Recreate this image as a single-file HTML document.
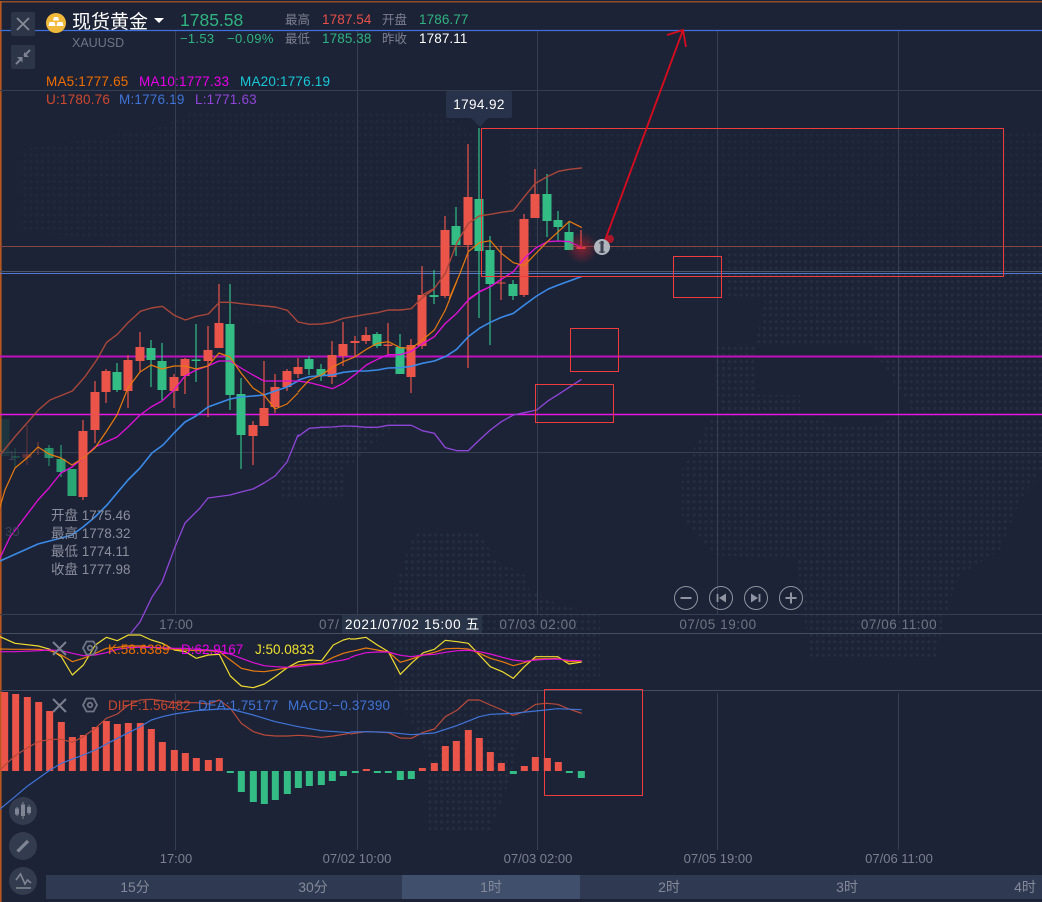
<!DOCTYPE html>
<html><head><meta charset="utf-8"><style>
html,body{margin:0;padding:0;background:#1c2336;width:1042px;height:902px;overflow:hidden}
svg{display:block}
text{font-family:"Liberation Sans","Noto Sans CJK SC",sans-serif}
</style></head><body>
<svg width="1042" height="902" viewBox="0 0 1042 902" xmlns="http://www.w3.org/2000/svg">
<defs>
<pattern id="d" patternUnits="userSpaceOnUse" x="-1.5" y="-1.8" width="5.87" height="6.67"><circle cx="2.9" cy="3.3" r="1.5" fill="#252d41"/></pattern>
<pattern id="f" patternUnits="userSpaceOnUse" x="-1.5" y="-1.8" width="5.87" height="6.67"><circle cx="2.9" cy="3.3" r="1.5" fill="#20283b"/></pattern>
<radialGradient id="g"><stop offset="0" stop-color="#d02030" stop-opacity=".55"/><stop offset="1" stop-color="#d02030" stop-opacity="0"/></radialGradient>
</defs>
<rect width="1042" height="902" fill="#1c2336"/>
<!-- dot map -->
<g fill="url(#d)">
<polygon points="780,250 1042,250 1042,415 915,415 870,345 755,345 765,300 725,295 725,250"/>
<polygon points="716,345 755,345 755,395 800,395 800,415 725,415 716,395"/>
<polygon points="710,420 820,420 840,425 875,425 890,420 1042,420 1042,470 1020,500 1000,550 960,575 950,600 935,660 810,660 797,560 715,555 682,520 682,470"/>
<polygon points="415,532 480,532 495,560 525,575 530,590 560,605 600,615 600,680 530,690 510,780 490,830 425,830 430,760 395,690 390,600 405,560"/>
<polygon points="280,420 400,420 345,470 345,500 280,500"/>
</g>
<g fill="url(#f)">
<polygon points="620,130 1042,130 1042,250 620,250"/>
<polygon points="200,110 440,110 480,140 480,260 420,300 400,345 400,420 280,420 280,330 180,300 180,250 20,230 20,150 150,130"/>
<polygon points="510,130 620,130 620,250 510,250"/>
</g>
<!-- borders -->
<rect x="0" y="1" width="1042" height="1.5" fill="#8f4e2a"/>
<rect x="0" y="1" width="1.6" height="901" fill="#b5561f"/>
<!-- grid -->
<g stroke="#363e52" stroke-width="1" fill="none">
<path d="M0 90.5H1042M0 452.5H1042M0 614.5H1042"/>
<path d="M175.5 30V614M357.5 30V614M537.5 30V614M717.5 30V614M898.5 30V614M175.5 693V850M357.5 693V850M537.5 693V850M717.5 693V850M898.5 693V850"/>
<path d="M0 271.5H1042" stroke="#4d5568"/>
<path d="M0 633.5H1042M0 690.5H1042" stroke="#454d60"/>
</g>
<path d="M0 246.5H1042" stroke="#874640" stroke-width="1"/>
<path d="M0 30.5H1042" stroke="#3f6fd8" stroke-width="1.2"/>
<path d="M0 273.5H1042" stroke="#5378d0" stroke-width="1"/>
<path d="M0 356.5H1042" stroke="#c010c0" stroke-width="2"/>
<path d="M0 414.5H1042" stroke="#e815e8" stroke-width="1.6"/>
<!-- faded candles -->
<g fill="none" stroke-width="1.2">
<path d="M5 419V456" stroke="#2eb67d" stroke-width="9" opacity=".12"/>
<path d="M15 448V467" stroke="#2eb67d" opacity=".25"/><path d="M11 457H20" stroke="#2eb67d" stroke-width="2" opacity=".25"/>
<path d="M27 425V465" stroke="#ea5449" opacity=".3"/><path d="M27 454V458" stroke="#ea5449" stroke-width="9" opacity=".3"/>
<path d="M38 442V455" stroke="#ea5449" opacity=".45"/>
<path d="M49 445V466" stroke="#2eb67d" opacity=".7"/><path d="M49 448V458" stroke="#2eb67d" stroke-width="9" opacity=".7"/>
<path d="M61 445V477" stroke="#2eb67d" opacity=".85"/><path d="M61 459V472" stroke="#2eb67d" stroke-width="9" opacity=".85"/>
<path d="M72 469V496" stroke="#2eb67d" stroke-width="9" opacity=".9"/>
</g>
<!-- red candles -->
<path fill="none" stroke="#ea5449" stroke-width="1.2" d="M83 420V500M95 381V443M106 369V403M128 355V408M140 332V372M174 374V408M185 358V394M208 326V417M219 284V348M253 421V465M264 361V426M275 374V413M287 369V391M298 358V378M332 341V384M343 322V366M355 336V356M366 327V344M388 323V354M411 339V393M422 266V349M445 216V298M468 144V368M501 246V300M524 214V297M535 169V218M581 230V249"/>
<path fill="none" stroke="#ea5449" stroke-width="9" d="M83 431V497M95 392V430M106 371V392M128 360V391M140 347V361M174 377V391M185 359V376M208 350V361M219 323V348M253 425V436M264 408V426M275 387V407M287 371V387M298 367V374M332 355V377M343 344V356M355 341V343M366 335V341M388 344.5V346M411 345V377M422 295V346M445 230V296M468 197V245M501 282.500V283.500M524 219V295M535 194V218M581 247V249"/>
<!-- green candles -->
<path fill="none" stroke="#33bd85" stroke-width="1.2" d="M117 363V392M151 340V387M162 343V400M196 324V382M230 284V410M241 378V469M309 356V375M321 364V381M377 332V348M400 334V374M434 270V304M456 207V256M479 128V318M490 236V345M513 280V300M547 174V237M558 211V241M569 222V250"/>
<path fill="none" stroke="#33bd85" stroke-width="9" d="M117 372V390M151 348V360M162 361V390M196 359.500V361M230 324V395M241 394V435M309 359V369M321 369V376M377 334V346M400 347V374M434 295V297M456 226V245M479 199V251M490 250V284M513 284V296M547 194V221M558 220V227M569 232V250"/>
<!-- main lines -->
<g fill="none" stroke-linejoin="round" stroke-linecap="round">
<g stroke="#a8473a" stroke-width="4.2" transform="translate(0 280) scale(.33333)">
<path d="M0 525L45 470L115 390L150 360L217 333L255 290L290 240L320 187L352 163L385 127L421 94L454 84L487 79L523 106L556 120L589 109L625 102L658 67L691 67L724 71L793 78L826 81L862 91L895 127"/>
</g>
<path stroke="#a8473a" stroke-width="4.2" transform="translate(280 280) scale(.33333)" d="M55 126L88 133L124 132L157 127L190 115L226 109L259 103L292 98L325 90L361 90L394 86L427 53L463 27"/>
<path stroke="#a8473a" stroke-width="4.2" transform="translate(420 130) scale(.33333)" d="M7 495L43 475L76 430L110 340L145 280L178 258L211 253L244 247L280 242L313 200L346 160L382 140L415 124L448 118L484 114"/>
<!-- blue -->
<g stroke="#3a8ae8" stroke-width="1.6">
<path d="M0 561L38 544L61 538L72 535L83 527L95 517L107 505L117 493L128 480L140 468L152 453L163 445L174 433L185 422L196 416L208 407L219 403L230 399L241 397L253 396L264 395L275 391L287 387L298 381"/>
</g>
<path stroke="#3a8ae8" stroke-width="4.8" transform="translate(280 280) scale(.33333)" d="M55 300L88 290L124 287L157 285L190 277L226 273L259 273L292 270L325 264L361 263L394 259L427 250L463 243L496 230L530 208L565 170L598 145L631 127L664 112L700 100L733 75L770 48L805 27L835 15L868 3L904 -10"/>
<!-- purple -->
<path stroke="#8f45d8" stroke-width="1.3" d="M131 633L140 622L152 597L162 582L175 547L185 523L200 508L208 498L230 495L241 492L253 489L264 483L275 476L287 462L298 435"/>
<path stroke="#8f45d8" stroke-width="4" transform="translate(280 280) scale(.33333)" d="M55 469L88 445L124 442L157 441L190 438L226 439L259 442L292 442L325 436L361 436L394 436L427 452L463 460L496 503L530 512L565 512L598 480L631 450L664 425L700 405L733 398L770 390L805 362L840 340L875 317L903 299"/>
<!-- magenta -->
<path stroke="#e010d8" stroke-width="1.3" d="M0 558L10 537L38 500L49 488L61 473L72 467L83 458L95 447L106 442L117 437L128 427L140 415L151 407L162 401L174 390L185 376L196 370L208 366L219 361L230 361L241 368L253 375L264 381L275 381L287 381L298 381"/>
<path stroke="#e010d8" stroke-width="4" transform="translate(280 280) scale(.33333)" d="M55 303L88 308L124 317L157 326L190 310L226 283L259 255L292 238L325 224L361 224L394 214L427 192L463 170L496 130L530 100L565 60L598 36L631 20L660 0"/>
<path stroke="#e010d8" stroke-width="4" transform="translate(420 130) scale(.33333)" d="M145 508L178 485L211 470L244 448L280 425L313 385L346 355L382 335L415 333L448 335L484 352"/>
<!-- orange -->
<path stroke="#e87a10" stroke-width="1.2" d="M0 507L5 490L15 468L27 458L38 447L49 454L61 458L72 465L83 458L95 448L106 432L117 415L128 388L140 372L151 365L162 369L174 366L185 366L196 369L208 366L219 353L230 357L241 373L253 388L264 395L275 409L287 404L298 393"/>
<path stroke="#e87a10" stroke-width="3.6" transform="translate(280 280) scale(.33333)" d="M55 335L88 300L124 285L157 262L190 245L226 230L259 208L292 190L325 185L361 203L394 205L427 180L463 150L496 90L530 5"/>
<path stroke="#e87a10" stroke-width="3.6" transform="translate(420 130) scale(.33333)" d="M88 505L120 430L145 365L178 338L211 332L244 370L280 398L313 407L346 372L382 335L415 305L448 274L484 292"/>
</g>
<!-- red rects -->
<g fill="none" stroke="#f03c3c" stroke-width="1">
<rect x="481.500" y="128.500" width="522" height="148"/>
<rect x="673.500" y="256.500" width="48" height="41"/>
<rect x="570.500" y="328.500" width="48" height="43"/>
<rect x="535.500" y="384.500" width="78" height="38"/>
<rect x="544.500" y="689.500" width="98" height="106"/>
</g>
<!-- glow + arrow + info -->
<circle cx="582" cy="248" r="16" fill="url(#g)"/>
<path d="M604 243L683 30M667 35L683 30L686 47" fill="none" stroke="#d80c1e" stroke-width="1.800"/>
<circle cx="610" cy="239" r="4" fill="#a8182a"/>
<circle cx="602" cy="247" r="8" fill="#b0b4bd"/>
<rect x="600.500" y="241" width="3" height="12" fill="#3a4050"/>
<path d="M599 243H604M599 252H605" stroke="#3a4050" stroke-width="1"/>
<!-- tooltip -->
<rect x="446" y="91" width="66" height="27" rx="2" fill="#28324a"/>
<polygon points="471,118 488,118 480,127" fill="#28324a"/>
<text x="479" y="109" fill="#fff" font-size="13.500" letter-spacing=".4" text-anchor="middle">1794.92</text>
<!-- header left -->
<rect x="11" y="12" width="24" height="24" rx="2" fill="#2d3548"/>
<path d="M17 18L29 30M29 18L17 30" stroke="#868b98" stroke-width="1.8"/>
<rect x="11" y="45" width="24" height="24" rx="2" fill="#2d3548"/>
<path d="M16 64L22 58M30 50L24 56" stroke="#7c8290" stroke-width="2"/><path d="M17 57H22.500V62.500ZM29 57H24V52Z" fill="#7c8290"/>
<circle cx="56" cy="23" r="10" fill="#f1b93a"/>
<path d="M54 17H58L59 20.500H53ZM49.500 22H54.500L55.500 26H48.500ZM57.500 22H62.500L63.500 26H56.500Z" fill="#fff"/>
<text x="72" y="28" fill="#fff" font-size="19">现货黄金</text>
<polygon points="154,18 164,18 159,23" fill="#fff"/>
<text x="72" y="47" fill="#6f7585" font-size="12.500">XAUUSD</text>
<text x="180" y="26" fill="#2fb380" font-size="17.500">1785.58</text>
<text x="180" y="43" fill="#2fb380" font-size="13" letter-spacing=".3">−1.53</text>
<text x="227" y="43" fill="#2fb380" font-size="13" letter-spacing=".4">−0.09%</text>
<text x="285" y="24" fill="#7b8090" font-size="12.500">最高</text>
<text x="322" y="24" fill="#e8504a" font-size="13.500" letter-spacing=".1">1787.54</text>
<text x="382" y="24" fill="#7b8090" font-size="12.500">开盘</text>
<text x="419" y="24" fill="#2fb380" font-size="13.500" letter-spacing=".1">1786.77</text>
<text x="285" y="43" fill="#7b8090" font-size="12.500">最低</text>
<text x="322" y="43" fill="#2fb380" font-size="13.500" letter-spacing=".1">1785.38</text>
<text x="382" y="43" fill="#7b8090" font-size="12.500">昨收</text>
<text x="419" y="43" fill="#fff" font-size="13.500" letter-spacing=".1">1787.11</text>
<g letter-spacing=".2">
<text x="46" y="86" fill="#f06e00" font-size="13.500">MA5:1777.65</text>
<text x="139" y="86" fill="#e800e8" font-size="13.500">MA10:1777.33</text>
<text x="240" y="86" fill="#18c8d8" font-size="13.500">MA20:1776.19</text>
<text x="46" y="104" fill="#d0482e" font-size="13.500">U:1780.76</text>
<text x="119" y="104" fill="#3f74d8" font-size="13.500">M:1776.19</text>
<text x="195" y="104" fill="#8f45d8" font-size="13.500">L:1771.63</text>
</g>
<!-- ohlc -->
<g fill="#8a8f9d" font-size="13.500">
<text x="51" y="520">开盘 1775.46</text>
<text x="51" y="538">最高 1778.32</text>
<text x="51" y="556">最低 1774.11</text>
<text x="51" y="574">收盘 1777.98</text>
</g>
<text x="5" y="536" fill="#3a4458" font-size="13">30</text>
<text x="8" y="460" fill="#3a4458" font-size="13">1</text>
<!-- zoom buttons -->
<g fill="none" stroke="#8e94a1" stroke-width="1">
<circle cx="686" cy="598" r="11.500"/><circle cx="721" cy="598" r="11.500"/><circle cx="756" cy="598" r="11.500"/><circle cx="791" cy="598" r="11.500"/>
<path d="M680.500 598H691.500M785.500 598H796.500M791 592.500V603.500" stroke-width="2"/>
<path d="M717.500 594V602M759.500 594V602" stroke-width="1.800"/>
</g>
<polygon points="726,593.500 726,602.500 719,598" fill="#8e94a1"/><polygon points="751,593.500 751,602.500 758,598" fill="#8e94a1"/>
<!-- axis labels -->
<g fill="#6f7585" font-size="13.500">
<text x="176" y="629" text-anchor="middle">17:00</text>
<text x="319" y="629" letter-spacing=".55">07/</text>
<text x="538" y="629" text-anchor="middle" letter-spacing=".55">07/03 02:00</text>
<text x="718" y="629" text-anchor="middle" letter-spacing=".55">07/05 19:00</text>
<text x="899" y="629" text-anchor="middle" letter-spacing=".55">07/06 11:00</text>
</g>
<rect x="342" y="615" width="140" height="18" fill="#2a3449"/>
<text x="345" y="629" fill="#fff" font-size="13.500" letter-spacing=".7">2021/07/02 15:00 五</text>
<!-- KDJ -->
<g fill="none" stroke-linejoin="round" stroke-width="3.600">
<path stroke="#f0dc30" transform="translate(0 610) scale(.33333)" d="M0 80L45 100L115 108L150 118L184 140L217 195L250 165L286 105L319 82L352 92L385 75L421 75L454 90L487 100L523 120L556 125L589 145L625 135L658 133L691 198L724 228L760 233L793 222L826 200L862 173L895 155L930 150L965 152L1000 105L1030 90L1050 85"/>
<path stroke="#f0dc30" transform="translate(340 610) scale(.33333)" d="M30 87L45 87L78 82L112 105L145 125L181 193L214 160L250 128L283 118L316 91L352 95L385 100L418 135L451 170L487 185L520 205L553 170L587 140L620 140L653 140L687 162L725 156"/>
<path stroke="#e87a10" transform="translate(0 610) scale(.33333)" d="M0 117L45 118L115 118L150 122L184 135L217 155L250 145L286 130L319 115L352 112L385 108L421 108L454 112L487 115L523 118L556 120L589 122L625 122L658 125L691 150L724 175L760 183L793 185L826 180L862 173L895 165L930 162L965 160L1000 142L1030 130L1050 125"/>
<path stroke="#e87a10" transform="translate(340 610) scale(.33333)" d="M30 125L45 122L78 114L112 120L145 126L181 157L214 147L250 135L283 127L316 116L352 115L385 117L418 130L451 145L487 155L520 167L553 158L587 147L620 146L653 145L687 155L725 153"/>
<path stroke="#e010d8" transform="translate(0 610) scale(.33333)" d="M0 125L45 125L115 122L150 120L184 122L217 130L250 137L286 135L319 128L352 118L385 113L421 112L454 112L487 113L523 115L556 115L589 118L625 120L658 123L691 132L724 145L760 158L793 167L826 170L862 172L895 170L930 165L965 163L1000 155L1030 150L1050 145"/>
<path stroke="#e010d8" transform="translate(340 610) scale(.33333)" d="M30 143L45 137L78 128L112 126L145 126L181 136L214 140L250 135L283 133L316 127L352 122L385 121L418 125L451 132L487 142L520 150L553 154L587 150L620 148L653 147L687 151L725 152"/>
</g>
<path d="M53 642L66 655M66 642L53 655M53 699L66 712M66 699L53 712" stroke="#7b8090" stroke-width="2" fill="none"/>
<g fill="none" stroke="#6f7585" stroke-width="1.800">
<polygon points="83,648 86.500,641.500 93.500,641.500 97,648 93.500,654.500 86.500,654.500"/><circle cx="90" cy="648" r="2.300"/>
<polygon points="83,705 86.500,698.500 93.500,698.500 97,705 93.500,711.500 86.500,711.500"/><circle cx="90" cy="705" r="2.300"/>
</g>
<text x="108" y="654" fill="#f06e00" font-size="13.500">K:58.6389</text>
<text x="181" y="654" fill="#e800e8" font-size="13.500">D:62.9167</text>
<text x="255" y="654" fill="#f0e030" font-size="13.500">J:50.0833</text>
<!-- MACD bars -->
<g fill="none" stroke-width="21" transform="translate(0 610) scale(.33333)">
<path stroke="#ea5449" d="M14 246V483M47 252V483M82 261V483M116 276V483M149 303V483M184 336V483M217 381V483M250 375V483M286 351V483M319 333V483M352 342V483M385 339V483M421 339V483M454 357V483M487 396V483M523 420V483M556 429V483M589 444V483M625 450V483M658 444V483"/>
<path stroke="#33bd85" d="M691 483V489M724 483V546M760 483V576M793 483V582M826 483V570M862 483V552M895 483V534M928 483V528M964 483V525M997 483V513M1030 483V498"/>
</g>
<g fill="none" stroke-width="21" transform="translate(340 610) scale(.33333)">
<path stroke="#33bd85" d="M10 483V498M46 483V489M112 483V489M145 483V489M181 483V510M214 483V507M520 483V492M688 483V489M724 483V504"/>
<path stroke="#ea5449" d="M79 477V483M247 474V483M283 459V483M316 408V483M349 393V483M385 360V483M418 384V483M451 426V483M484 459V483M553 468V483M586 441V483M622 444V483M655 456V483"/>
</g>
<!-- MACD lines -->
<g fill="none" stroke-linejoin="round" stroke-width="3.600">
<path stroke="#b84a3a" transform="translate(0 610) scale(.33333)" d="M0 480L45 437L80 415L115 395L150 388L184 388L217 397L250 380L286 355L319 325L352 312L385 285L421 270L454 268L487 272L523 278L556 278L589 278L625 282L658 270L691 295L724 340L760 365L793 375L826 378L862 378L895 376L930 378L965 382L1000 378L1050 370"/>
<path stroke="#b84a3a" transform="translate(340 610) scale(.33333)" d="M30 372L45 370L78 365L112 366L145 368L181 384L214 385L250 367L283 357L316 320L352 300L385 270L418 270L451 285L487 300L520 316L553 305L587 283L620 280L653 283L687 297L725 310"/>
<path stroke="#3f74d8" transform="translate(0 610) scale(.33333)" d="M0 597L45 560L80 530L115 505L150 480L184 460L250 435L286 420L352 385L421 350L454 330L487 320L523 312L589 302L658 297L691 297L760 315L826 335L895 350L965 362L1050 368"/>
<path stroke="#3f74d8" transform="translate(340 610) scale(.33333)" d="M30 366L78 365L145 367L214 374L283 369L350 347L418 320L451 313L520 310L587 303L653 296L725 299"/>
</g>
<text x="108" y="710" fill="#c8472f" font-size="13.500">DIFF:1.56482</text>
<text x="198" y="710" fill="#3f74d8" font-size="13.500">DEA:1.75177</text>
<text x="288" y="710" fill="#3f74d8" font-size="13.500" letter-spacing=".15">MACD:−0.37390</text>
<!-- bottom axis -->
<g fill="#7b8090" font-size="13">
<text x="176" y="863" text-anchor="middle">17:00</text>
<text x="357" y="863" text-anchor="middle">07/02 10:00</text>
<text x="538" y="863" text-anchor="middle">07/03 02:00</text>
<text x="718" y="863" text-anchor="middle">07/05 19:00</text>
<text x="899" y="863" text-anchor="middle">07/06 11:00</text>
</g>
<!-- left round buttons -->
<circle cx="23" cy="811" r="14" fill="#333b4e"/>
<circle cx="23" cy="846" r="14" fill="#333b4e"/>
<circle cx="23" cy="881" r="14" fill="#333b4e"/>
<g fill="none" stroke="#7f8593">
<path d="M17 807V816M23 802V819M29 805V815" stroke-width="1"/>
<path d="M17 808.500V814.500M23 804.500V816M29 807V813" stroke-width="4"/>
<path d="M17.500 851.500L28 841" stroke-width="3.200"/>
<path d="M16 880L20.500 874L25 884L27.500 880L31 883" stroke-width="1.600"/>
<path d="M16 888H31" stroke-width="1.600"/>
</g>
<!-- tabs -->
<rect x="46" y="875" width="996" height="24" fill="#2f3a52"/>
<rect x="402" y="875" width="178" height="24" fill="#40506c"/>
<g fill="#838999" font-size="14" text-anchor="middle">
<text x="135" y="892">15分</text>
<text x="313" y="892">30分</text>
<text x="491" y="892">1时</text>
<text x="669" y="892">2时</text>
<text x="847" y="892">3时</text>
<text x="1025" y="892">4时</text>
</g>
</svg>
</body></html>
